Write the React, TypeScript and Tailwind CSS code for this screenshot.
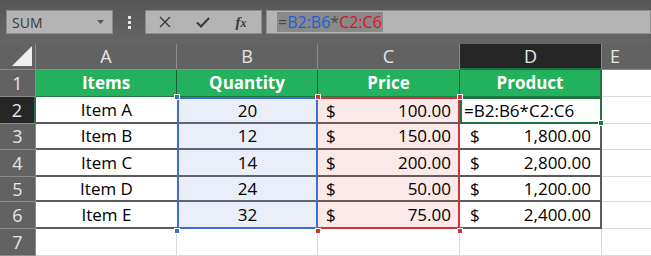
import React from "react";

const cellFont = { fontFamily: "'Open Sans', 'Noto Sans', sans-serif" };

export default function App() {
  const rows = [
    ["Item A", "20", "100.00", null],
    ["Item B", "12", "150.00", "1,800.00"],
    ["Item C", "14", "200.00", "2,800.00"],
    ["Item D", "24", "50.00", "1,200.00"],
    ["Item E", "32", "75.00", "2,400.00"],
  ];
  const rowH = [27, 27, 26, 27, 25, 27];
  return (
    <div className="w-[651px] h-[256px] overflow-hidden bg-[#656565] relative" style={cellFont}>
      {/* Formula bar */}
      <div className="h-[44px] bg-gradient-to-b from-[#565656] to-[#666666] flex items-start pt-[10px] pl-[6px]">
        <div className="w-[107px] h-[24px] bg-[#b4b4b4] border border-[#8c8c8c] flex items-center justify-between pl-[5px] pr-[8px]">
          <span className="text-[14px] text-[#3a3a3a]" style={{ fontFamily: "'Open Sans', sans-serif" }}>SUM</span>
          <svg width="7" height="4" viewBox="0 0 7 4"><path d="M0 0h7L3.5 4z" fill="#555" /></svg>
        </div>
        <div className="w-[32px] h-[24px] flex items-center justify-center">
          <div className="flex flex-col gap-[2px]">
            <div className="w-[3px] h-[3px] bg-[#e6e6e6]" />
            <div className="w-[3px] h-[3px] bg-[#e6e6e6]" />
            <div className="w-[3px] h-[3px] bg-[#e6e6e6]" />
          </div>
        </div>
        <div className="w-[117px] h-[24px] bg-[#b4b4b4] border border-[#8c8c8c] flex items-center">
          <div className="w-[38px] flex justify-center">
            <svg width="12" height="12" viewBox="0 0 12 12"><path d="M1 1L11 11M11 1L1 11" stroke="#3a3a3a" strokeWidth="1.4" /></svg>
          </div>
          <div className="w-[38px] flex justify-center">
            <svg width="14" height="11" viewBox="0 0 14 11"><path d="M1 5.5L5 9.5L13 1" stroke="#3a3a3a" strokeWidth="2" fill="none" /></svg>
          </div>
          <div className="w-[38px] flex justify-center">
            <span className="text-[15px] italic font-bold text-[#3a3a3a]" style={{ fontFamily: "'Liberation Serif', serif" }}>f<span className="text-[12px]">x</span></span>
          </div>
        </div>
        <div className="ml-[4px] flex-1 h-[24px] bg-[#b4b4b4] border border-[#8c8c8c] flex items-center pl-[10px]">
          <div className="bg-[#898989] h-[20px] flex items-center text-[16px] px-[1px]" style={{ fontFamily: "'Open Sans', sans-serif" }}>
            <span className="text-[#4a4a4a]">=</span>
            <span className="text-[#1a5fd8]">B2:B6</span>
            <span className="text-[#4a4a4a]">*</span>
            <span className="text-[#d8141c]">C2:C6</span>
          </div>
        </div>
      </div>

      {/* Grid */}
      <div className="grid grid-cols-[36px_141px_141px_142px_142px_49px] bg-white relative">
        <div className="h-[26px] bg-[#626262] border-r border-b border-[#8a8a8a] relative">
          <svg className="absolute right-[3px] bottom-[3px]" width="20" height="20" viewBox="0 0 20 20"><path d="M20 0V20H0z" fill="#efefef" /></svg>
        </div>
        {["A", "B", "C", "D", "E"].map((c) => (
          <div key={c} className={`h-[26px] flex items-center justify-center text-[18px] border-b ${c === "D" ? "bg-[#262626] text-[#e8e8e8] border-[#217346] border-b-2" : "bg-[#626262] text-[#e6e6e6] border-[#8a8a8a]"} ${c === "E" ? "justify-start pl-[8px]" : "border-r border-r-[#8a8a8a]"}`}>
            {c}
          </div>
        ))}

        <div className="h-[27px] bg-[#626262] text-[#e6e6e6] text-[18px] flex items-center justify-center border-r border-b border-[#8a8a8a]">1</div>
        {["Items", "Quantity", "Price", "Product"].map((t, i) => (
          <div key={t} className={`h-[27px] bg-[#23b15e] text-white font-bold text-[17px] flex items-center justify-center border-b border-[#1f7a40] ${i === 3 ? "border-r-2 border-r-[#217346]" : "border-r border-r-[#1c5e33]"}`}>{t}</div>
        ))}
        <div className="h-[27px] bg-white border-b border-[#d9d9d9]" />

        {rows.map((r, idx) => {
          const h = rowH[idx + 1];
          const last = idx === 4;
          return (
            <React.Fragment key={idx}>
              <div style={{ height: h }} className={`text-[18px] flex items-center justify-center border-r border-b border-[#8a8a8a] ${idx === 0 ? "bg-[#262626] text-[#e8e8e8] border-r-2 border-r-[#217346]" : "bg-[#626262] text-[#e6e6e6]"}`}>{idx + 2}</div>
              <div style={{ height: h }} className="bg-white text-[17px] text-black flex items-center justify-center border-b-2 border-[#5a5a5a]">{r[0]}</div>
              <div style={{ height: h }} className={`bg-[#e9eef8] text-[17px] text-black flex items-center justify-center border-l-2 border-r-2 border-[#3d6fd1] ${idx === 0 ? "border-t-2" : ""} ${last ? "border-b-2 border-b-[#3d6fd1]" : "border-b-2 border-b-[#5f6470]"}`}>
                {r[1]}
              </div>
              <div style={{ height: h }} className={`bg-[#fbe9e9] text-[17px] text-black flex items-center justify-between pl-[8px] pr-[7px] border-r-2 border-[#d2323c] ${idx === 0 ? "border-t-2" : ""} ${last ? "border-b-2 border-b-[#d2323c]" : "border-b-2 border-b-[#6a5b5b]"}`}>
                <span>$</span><span>{r[2]}</span>
              </div>
              {r[3] === null ? (
                <div style={{ height: h }} className="bg-white text-[17px] text-black flex items-center pl-[2px] border-2 border-[#217346] relative whitespace-nowrap">
                  =B2:B6*C2:C6
                  <div className="absolute right-[-4px] bottom-[-4px] w-[6px] h-[6px] bg-[#217346] border border-white" />
                </div>
              ) : (
                <div style={{ height: h }} className="bg-white text-[17px] text-black flex items-center justify-between pl-[10px] pr-[9px] border-r-2 border-b-2 border-[#5a5a5a]">
                  <span>$</span><span>{r[3]}</span>
                </div>
              )}
              <div style={{ height: h }} className="bg-white border-b border-[#d9d9d9]" />
            </React.Fragment>
          );
        })}

        <div className="h-[27px] bg-[#626262] text-[#e6e6e6] text-[18px] flex items-center justify-center border-r border-b border-[#8a8a8a]">7</div>
        <div className="h-[27px] bg-white border-r border-b border-[#d9d9d9]" />
        <div className="h-[27px] bg-white border-r border-b border-[#d9d9d9]" />
        <div className="h-[27px] bg-white border-r border-b border-[#d9d9d9]" />
        <div className="h-[27px] bg-white border-r border-b border-[#d9d9d9]" />
        <div className="h-[27px] bg-white border-b border-[#d9d9d9]" />

        <div className="absolute left-[174px] top-[50px] w-[6px] h-[6px] bg-[#3d6fd1] border border-white" />
        <div className="absolute left-[174px] top-[184px] w-[6px] h-[6px] bg-[#3d6fd1] border border-white" />
        <div className="absolute left-[315px] top-[50px] w-[6px] h-[6px] bg-[#d2323c] border border-white" />
        <div className="absolute left-[315px] top-[184px] w-[6px] h-[6px] bg-[#d2323c] border border-white" />
        <div className="absolute left-[457px] top-[50px] w-[6px] h-[6px] bg-[#d2323c] border border-white" />
        <div className="absolute left-[457px] top-[184px] w-[6px] h-[6px] bg-[#d2323c] border border-white" />
      </div>
    </div>
  );
}
